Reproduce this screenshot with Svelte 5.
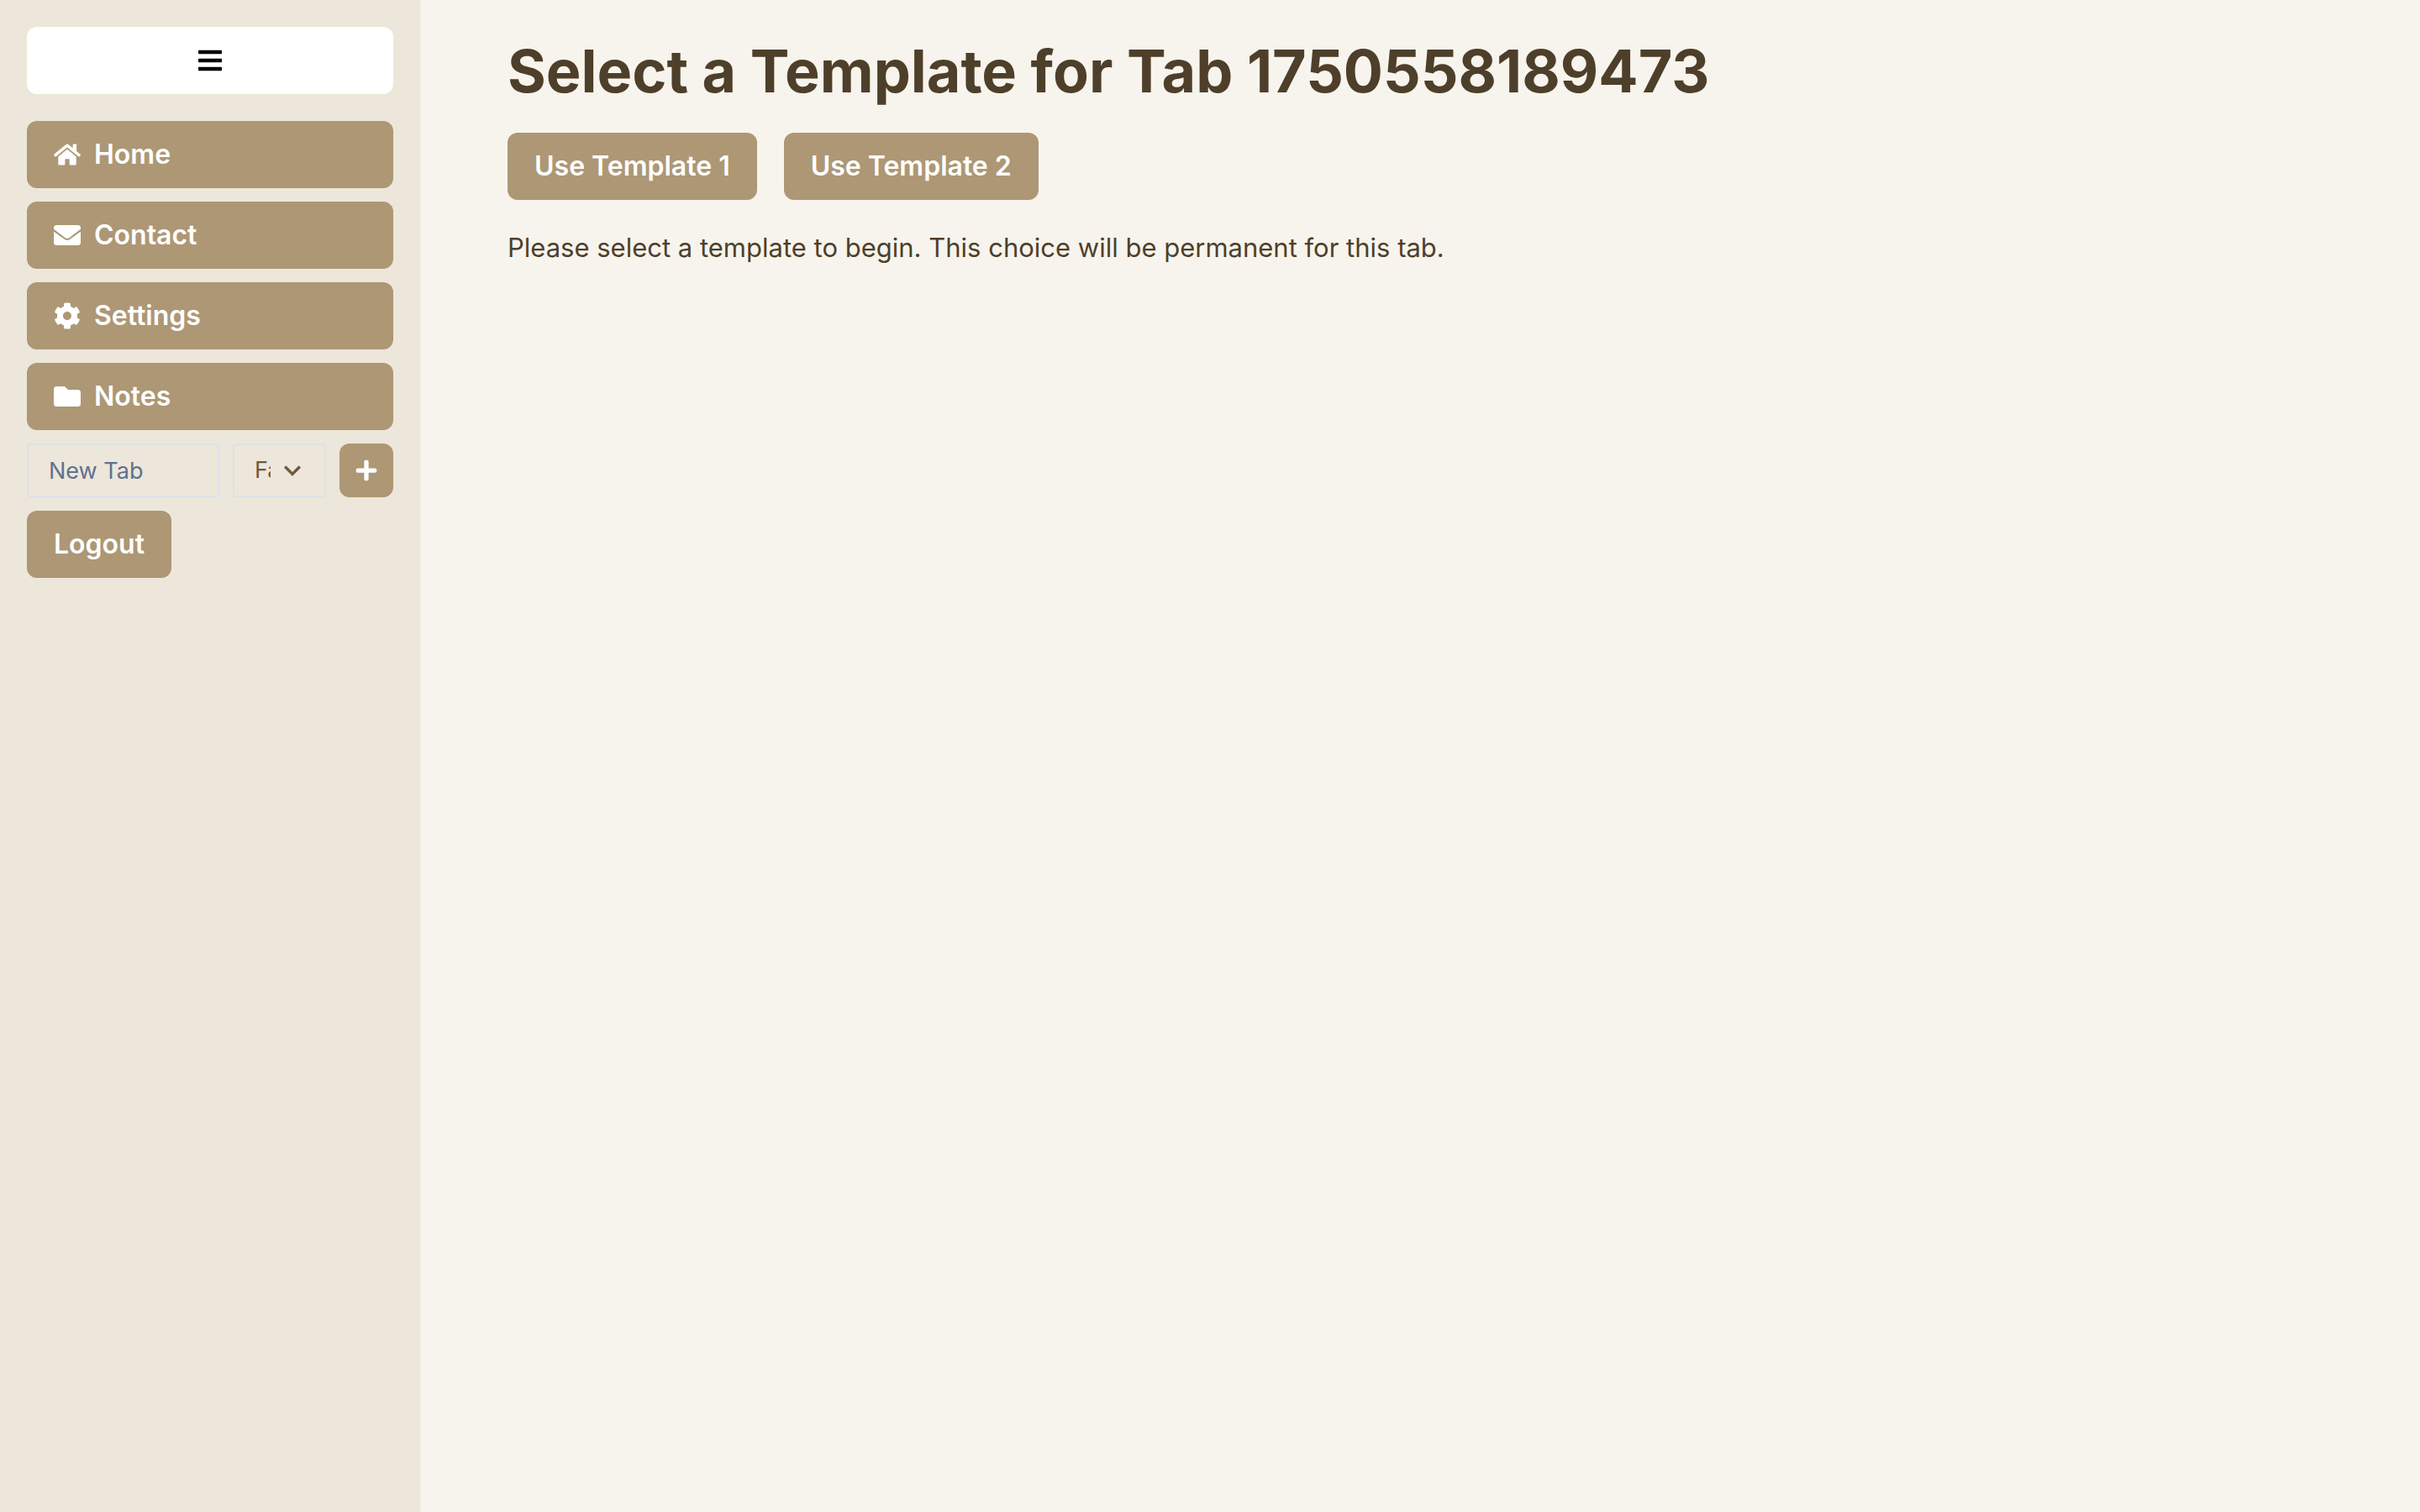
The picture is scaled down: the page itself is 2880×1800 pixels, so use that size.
<script>
  const icons = {
    home: {
      box: '0 0 576 512',
      path: 'M280.37 148.26L96 300.11V464a16 16 0 0 0 16 16l112.06-.29a16 16 0 0 0 15.92-16V368a16 16 0 0 1 16-16h64a16 16 0 0 1 16 16v95.64a16 16 0 0 0 16 16.05L464 480a16 16 0 0 0 16-16V300L295.67 148.26a12.19 12.19 0 0 0-15.3 0zM571.6 251.47L488 182.56V44.05a12 12 0 0 0-12-12h-56a12 12 0 0 0-12 12v72.61L318.47 43a48 48 0 0 0-61 0L4.34 251.47a12 12 0 0 0-1.6 16.9l25.5 31A12 12 0 0 0 45.15 301l235.22-193.74a12.19 12.19 0 0 1 15.3 0L530.9 301a12 12 0 0 0 16.9-1.6l25.5-31a12 12 0 0 0-1.7-16.93z'
    },
    envelope: {
      box: '0 0 512 512',
      path: 'M502.3 190.8c3.9-3.1 9.7-.2 9.7 4.7V400c0 26.5-21.5 48-48 48H48c-26.5 0-48-21.5-48-48V195.6c0-5 5.7-7.8 9.7-4.7 22.4 17.4 52.1 39.5 154.1 113.6 21.1 15.4 56.7 47.8 92.2 47.6 35.7.3 72-32.8 92.3-47.6 102-74.1 131.6-96.3 154-113.7zM256 320c23.2.4 56.6-29.2 73.4-41.4 132.7-96.3 142.8-104.7 173.4-128.7 5.8-4.5 9.2-11.5 9.2-18.9v-19c0-26.5-21.5-48-48-48H48c-26.5 0-48 21.5-48 48v19c0 7.4 3.4 14.3 9.2 18.9 30.6 23.9 40.7 32.4 173.4 128.7 16.8 12.2 50.2 41.8 73.4 41.4z'
    },
    cog: {
      box: '0 0 512 512',
      path: 'M487.4 315.7l-42.6-24.6c4.3-23.2 4.3-47 0-70.2l42.6-24.6c4.9-2.8 7.1-8.6 5.5-14-11.1-35.6-30-67.8-54.7-94.6-3.8-4.1-10-5.1-14.8-2.3L380.8 110c-17.9-15.4-38.5-27.3-60.8-35.1V25.8c0-5.6-3.9-10.5-9.4-11.7-36.7-8.2-74.3-7.8-109.2 0-5.5 1.2-9.4 6.1-9.4 11.7V75c-22.2 7.9-42.8 19.8-60.8 35.1L88.7 85.5c-4.9-2.8-11-1.9-14.8 2.3-24.7 26.7-43.6 58.9-54.7 94.6-1.7 5.4.6 11.2 5.5 14L67.3 221c-4.3 23.2-4.3 47 0 70.2l-42.6 24.6c-4.9 2.8-7.1 8.6-5.5 14 11.1 35.6 30 67.8 54.7 94.6 3.8 4.1 10 5.1 14.8 2.3l42.6-24.6c17.9 15.4 38.5 27.3 60.8 35.1v49.2c0 5.6 3.9 10.5 9.4 11.7 36.7 8.2 74.3 7.8 109.2 0 5.5-1.2 9.4-6.1 9.4-11.7v-49.2c22.2-7.9 42.8-19.8 60.8-35.1l42.6 24.6c4.9 2.8 11 1.9 14.8-2.3 24.7-26.7 43.6-58.9 54.7-94.6 1.5-5.5-.7-11.3-5.6-14.1zM256 336c-44.1 0-80-35.9-80-80s35.9-80 80-80 80 35.9 80 80-35.9 80-80 80z'
    },
    folder: {
      box: '0 0 512 512',
      path: 'M464 128H272l-64-64H48C21.49 64 0 85.49 0 112v288c0 26.51 21.49 48 48 48h416c26.51 0 48-21.49 48-48V176c0-26.51-21.49-48-48-48z'
    },
    plus: {
      box: '0 0 448 512',
      path: 'M416 208H272V64c0-17.67-14.33-32-32-32h-32c-17.67 0-32 14.33-32 32v144H32c-17.67 0-32 14.33-32 32v32c0 17.67 14.33 32 32 32h144v144c0 17.67 14.33 32 32 32h32c17.67 0 32-14.33 32-32V304h144c17.67 0 32-14.33 32-32v-32c0-17.67-14.33-32-32-32z'
    },
    bars: {
      box: '0 0 448 512',
      path: 'M16 132h416c8.84 0 16-7.16 16-16V76c0-8.84-7.16-16-16-16H16C7.16 60 0 67.16 0 76v40c0 8.84 7.16 16 16 16zm0 160h416c8.84 0 16-7.16 16-16v-40c0-8.84-7.16-16-16-16H16c-8.84 0-16 7.16-16 16v40c0 8.84 7.16 16 16 16zm0 160h416c8.84 0 16-7.16 16-16v-40c0-8.84-7.16-16-16-16H16c-8.84 0-16 7.16-16 16v40c0 8.84 7.16 16 16 16z'
    },
    chevron: {
      box: '0 0 24 24',
      path: 'M16.59 8.59L12 13.17 7.41 8.59 6 10l6 6 6-6z'
    }
  };

  const tabs = [
    { label: 'Home', icon: 'home' },
    { label: 'Contact', icon: 'envelope' },
    { label: 'Settings', icon: 'cog' },
    { label: 'Notes', icon: 'folder' }
  ];

  const templates = ['Use Template 1', 'Use Template 2'];
  let newTab = $state('');
</script>

{#snippet icon(name)}
  <svg class="icon {name}" viewBox={icons[name].box} fill="currentColor" aria-hidden="true">
    <path d={icons[name].path} />
  </svg>
{/snippet}

<div class="app">
  <aside>
    <button class="btn toggle" type="button" aria-label="Toggle sidebar">{@render icon('bars')}</button>
    <nav>
      {#each tabs as tab}
        <button class="btn" type="button">{@render icon(tab.icon)}{tab.label}</button>
      {/each}
    </nav>
    <form onsubmit={(e) => e.preventDefault()}>
      <input type="text" placeholder="New Tab" aria-label="New tab name" bind:value={newTab} />
      <div class="picker">
        <select aria-label="Tab icon">
          <option>FaFolder</option>
        </select>
        <span class="arrow">{@render icon('chevron')}</span>
      </div>
      <button class="btn add" type="submit" aria-label="Add tab">{@render icon('plus')}</button>
    </form>
    <button class="btn logout" type="button">Logout</button>
  </aside>
  <main>
    <h1>Select a Template for Tab 1750558189473</h1>
    <div class="choices">
      {#each templates as template}
        <button class="btn" type="button">{template}</button>
      {/each}
    </div>
    <p>Please select a template to begin. This choice will be permanent for this tab.</p>
  </main>
</div>

<style>
  :global(body) {
    margin: 0;
    background: #f7f4ed;
  }

  .app {
    display: flex;
    min-height: 100vh;
    color: #4e3f2a;
    font-family: Inter, 'Liberation Sans', sans-serif;
    font-size: 32px;
    line-height: 48px;
  }

  aside {
    box-sizing: border-box;
    display: flex;
    flex-direction: column;
    flex: 0 0 500px;
    gap: 16px;
    padding: 32px;
    background: #ede6da;
  }

  nav {
    display: flex;
    flex-direction: column;
    gap: 16px;
  }

  .btn {
    display: flex;
    align-items: center;
    gap: 16px;
    height: 80px;
    padding: 0 32px;
    border: 0;
    border-radius: 12px;
    background: #ad9775;
    color: #fff;
    font: inherit;
    font-weight: 600;
    cursor: pointer;
  }

  .toggle {
    justify-content: center;
    margin-bottom: 16px;
    background: #fff;
    color: #000;
  }

  .icon {
    display: block;
    flex: none;
    width: 32px;
    height: 32px;
  }

  .icon.plus {
    width: 28px;
    height: 28px;
  }

  .icon.chevron {
    width: 40px;
    height: 40px;
  }

  form {
    display: grid;
    grid-template-columns: minmax(0, 229fr) minmax(0, 111fr) 64px;
    gap: 16px;
  }

  input,
  select {
    box-sizing: border-box;
    width: 100%;
    height: 64px;
    margin: 0;
    padding: 0 24px;
    border: 2px solid #dce2e9;
    border-radius: 4px;
    background: transparent;
    color: #6b5a3e;
    font: inherit;
    font-size: 27px;
  }

  input::placeholder {
    color: #5f7190;
    opacity: 1;
  }

  .picker {
    position: relative;
  }

  select {
    display: block;
    padding-right: 64px;
    appearance: none;
  }

  .arrow {
    position: absolute;
    top: 12px;
    right: 20px;
    color: #6b5a3e;
    pointer-events: none;
  }

  .add {
    justify-content: center;
    height: 64px;
    padding: 0;
  }

  .logout {
    align-self: flex-start;
  }

  main {
    flex: 1;
    min-width: 0;
    padding: 32px 104px;
  }

  h1 {
    margin: 0 0 20px;
    font-size: 70px;
    font-weight: 700;
    line-height: 106px;
  }

  .choices {
    display: flex;
    gap: 32px;
  }

  p {
    margin: 32px 0 0;
    font-size: 31px;
    line-height: 50px;
  }
</style>
